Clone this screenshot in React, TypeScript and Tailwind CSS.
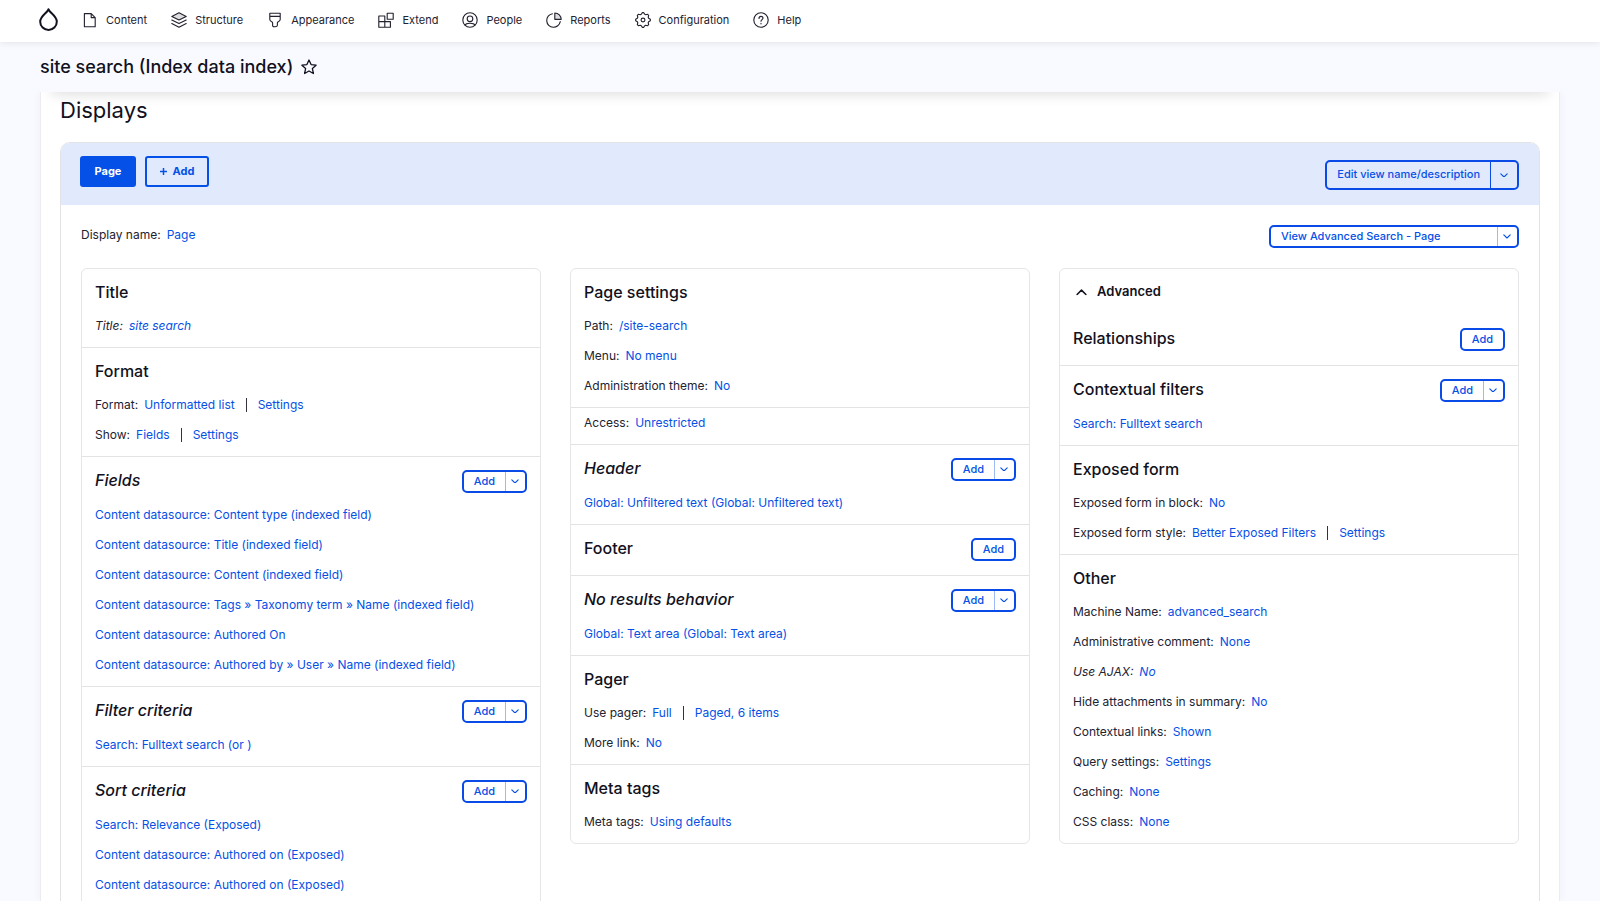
import React from 'react';

type Row = {
  label?: string;
  links: string[];
  italic?: boolean;
};

type SectionProps = {
  title?: string;
  italic?: boolean;
  action?: 'add' | 'split';
  rows?: Row[];
};

const Icon: React.FC<{ children: React.ReactNode }> = ({ children }) => (
  <svg className="w-4 h-4 shrink-0" viewBox="0 0 20 20" fill="none" stroke="currentColor" strokeWidth="1.4" strokeLinejoin="round" strokeLinecap="round" aria-hidden="true">
    {children}
  </svg>
);

// Outline of a gear with eight teeth, centred in the 20x20 icon box
const gear = Array.from({ length: 32 }, (_, i) => {
  const radius = i % 4 < 2 ? 9.2 : 7.4;
  const angle = ((i - 0.5) * Math.PI) / 16;
  return `${(10 + radius * Math.sin(angle)).toFixed(2)} ${(10 - radius * Math.cos(angle)).toFixed(2)}`;
}).join('L');

const menu = [
  { name: 'Content', icon: <path d="M3 2h8.500l5 5v11.500H3zM11.500 2v5h5" /> },
  {
    name: 'Structure',
    icon: (
      <>
        <path d="M10 1l9 4.500-9 4.500-9-4.500z" fill="currentColor" fillOpacity="0.15" />
        <path d="M1 10l9 4.500 9-4.500M1 14.500L10 19l9-4.500" />
      </>
    ),
  },
  {
    name: 'Appearance',
    icon: <path d="M3.500 5.500v4c0 2.500 3.500 2 3.500 4v3.500c0 2.500 6 1.500 6-.5v-3c0-2 3.500-1.500 3.500-4v-8h-13v4h13" />,
  },
  {
    name: 'Extend',
    icon: <path d="M1 5h7.500v14H1zM1 12h14.500v7h-7M11.500 1.500H19V9h-7.500z" />,
  },
  {
    name: 'People',
    icon: (
      <>
        <circle cx="10" cy="10" r="9" />
        <circle cx="10" cy="8.500" r="3.500" />
        <path d="M4 16.500c.5-2 2-2.500 6-2.500s5.500.5 6 2.500" />
      </>
    ),
  },
  {
    name: 'Reports',
    icon: (
      <>
        <path d="M8 2.200A8.500 8.500 0 1 0 17.800 12" />
        <path d="M11 1.200v8h8a8 8 0 0 0-8-8z" fill="currentColor" fillOpacity="0.15" />
      </>
    ),
  },
  {
    name: 'Configuration',
    icon: (
      <>
        <path d={`M${gear}z`} />
        <circle cx="10" cy="10" r="2.400" />
      </>
    ),
  },
  {
    name: 'Help',
    icon: (
      <>
        <circle cx="10" cy="10" r="9" />
        <path d="M7.500 8c0-3.500 5-3.300 5-.4 0 1.900-2.500 1.900-2.500 4M10 14.200v.6" />
      </>
    ),
  },
];

const Chevron: React.FC<{ className?: string }> = ({ className }) => (
  <svg className={className} viewBox="0 0 10 6" fill="none" stroke="currentColor" strokeWidth="1.4" strokeLinecap="round" strokeLinejoin="round" aria-hidden="true">
    <path d="M1 1l4 4 4-4" />
  </svg>
);

const AddButton: React.FC<{ split?: boolean }> = ({ split }) => (
  <div className="flex h-[23px] shrink-0 overflow-hidden rounded-[5px] border-2 border-[#0a4be8] text-[11px] font-medium text-[#0550e6]">
    <button type="button" className="w-[41px]">
      Add
    </button>
    {split && (
      <button type="button" aria-label="List additional actions" className="flex w-5 items-center justify-center border-l border-[#9db9f7] pr-px">
        <Chevron className="w-2" />
      </button>
    )}
  </div>
);

const Section: React.FC<SectionProps> = ({ title, italic, action, rows = [] }) => (
  <section className={`border-b border-[#e3e3e6] px-[13px] last:border-b-0 ${rows.length ? 'pb-1.5' : 'pb-[7px]'} ${title ? 'pt-[11px]' : ''}`}>
    {title && (
      <div className={`mb-1.5 flex justify-between ${action ? 'h-[26px]' : 'h-[25px]'}`}>
        <h3 className={`text-[16px] leading-6 font-medium text-[#111120] ${italic ? 'italic' : ''}`}>{title}</h3>
        {action && (
          <div className="flex items-center">
            <AddButton split={action === 'split'} />
          </div>
        )}
      </div>
    )}
    {rows.map((row, i) => (
      <div key={i} className={`flex h-[30px] items-center gap-1.5 whitespace-nowrap ${row.italic ? 'italic' : ''}`}>
        {row.label && <span>{row.label}</span>}
        {row.links.map((link, n) => (
          <React.Fragment key={link}>
            {n > 0 && <span className="mx-[5px] h-3.5 w-px bg-[#333340]"></span>}
            <a href="#" className="text-[#0550e6]">
              {link}
            </a>
          </React.Fragment>
        ))}
      </div>
    ))}
  </section>
);

const first: SectionProps[] = [
  { title: 'Title', rows: [{ label: 'Title:', links: ['site search'], italic: true }] },
  {
    title: 'Format',
    rows: [
      { label: 'Format:', links: ['Unformatted list', 'Settings'] },
      { label: 'Show:', links: ['Fields', 'Settings'] },
    ],
  },
  {
    title: 'Fields',
    italic: true,
    action: 'split',
    rows: [
      { links: ['Content datasource: Content type (indexed field)'] },
      { links: ['Content datasource: Title (indexed field)'] },
      { links: ['Content datasource: Content (indexed field)'] },
      { links: ['Content datasource: Tags » Taxonomy term » Name (indexed field)'] },
      { links: ['Content datasource: Authored On'] },
      { links: ['Content datasource: Authored by » User » Name (indexed field)'] },
    ],
  },
  { title: 'Filter criteria', italic: true, action: 'split', rows: [{ links: ['Search: Fulltext search (or )'] }] },
  {
    title: 'Sort criteria',
    italic: true,
    action: 'split',
    rows: [
      { links: ['Search: Relevance (Exposed)'] },
      { links: ['Content datasource: Authored on (Exposed)'] },
      { links: ['Content datasource: Authored on (Exposed)'] },
    ],
  },
];

const second: SectionProps[] = [
  {
    title: 'Page settings',
    rows: [
      { label: 'Path:', links: ['/site-search'] },
      { label: 'Menu:', links: ['No menu'] },
      { label: 'Administration theme:', links: ['No'] },
    ],
  },
  { rows: [{ label: 'Access:', links: ['Unrestricted'] }] },
  { title: 'Header', italic: true, action: 'split', rows: [{ links: ['Global: Unfiltered text (Global: Unfiltered text)'] }] },
  { title: 'Footer', action: 'add' },
  { title: 'No results behavior', italic: true, action: 'split', rows: [{ links: ['Global: Text area (Global: Text area)'] }] },
  {
    title: 'Pager',
    rows: [
      { label: 'Use pager:', links: ['Full', 'Paged, 6 items'] },
      { label: 'More link:', links: ['No'] },
    ],
  },
  { title: 'Meta tags', rows: [{ label: 'Meta tags:', links: ['Using defaults'] }] },
];

const third: SectionProps[] = [
  { title: 'Relationships', action: 'add' },
  { title: 'Contextual filters', action: 'split', rows: [{ links: ['Search: Fulltext search'] }] },
  {
    title: 'Exposed form',
    rows: [
      { label: 'Exposed form in block:', links: ['No'] },
      { label: 'Exposed form style:', links: ['Better Exposed Filters', 'Settings'] },
    ],
  },
  {
    title: 'Other',
    rows: [
      { label: 'Machine Name:', links: ['advanced_search'] },
      { label: 'Administrative comment:', links: ['None'] },
      { label: 'Use AJAX:', links: ['No'], italic: true },
      { label: 'Hide attachments in summary:', links: ['No'] },
      { label: 'Contextual links:', links: ['Shown'] },
      { label: 'Query settings:', links: ['Settings'] },
      { label: 'Caching:', links: ['None'] },
      { label: 'CSS class:', links: ['None'] },
    ],
  },
];

const Column: React.FC<{ sections: SectionProps[]; children?: React.ReactNode }> = ({ sections, children }) => (
  <div className="min-w-0 rounded-md border border-[#e6e6e9]">
    {children}
    {sections.map((section, i) => (
      <Section key={i} {...section} />
    ))}
  </div>
);

const App: React.FC = () => {
  return (
    <div className="flex h-screen flex-col overflow-hidden bg-[#f9faff] font-['Inter',sans-serif] text-[12px] text-[#222230]">
      {/* Admin toolbar */}
      <nav className="relative z-20 flex h-[42px] shrink-0 items-center bg-white pb-0.5 pl-[39px] text-[11px] shadow-[0_0_8px_rgba(0,0,0,0.12)]">
        <a href="#" aria-label="Home" className="mr-6 text-[#111120]">
          <svg className="w-[19px] h-6" viewBox="0 0 19 24" fill="none" stroke="currentColor" strokeWidth="2" strokeLinejoin="round" aria-hidden="true">
            <path d="M9.500 1.200C8.500 5 1.200 7.500 1.200 13.700a8.300 8.300 0 0 0 16.600 0C17.800 7.500 10.500 5 9.500 1.200z" />
          </svg>
        </a>
        <ul className="flex gap-6">
          {menu.map((item) => (
            <li key={item.name}>
              <a href="#" className="flex items-center gap-2 text-[#222230]">
                <Icon>{item.icon}</Icon>
                {item.name}
              </a>
            </li>
          ))}
        </ul>
      </nav>

      {/* Page title */}
      <header className="relative z-10 mx-10 flex h-[50px] shrink-0 items-center gap-2 bg-[#f9faff] text-[#111120] shadow-[0_14px_14px_-12px_rgba(0,0,0,0.14)]">
        <h1 className="text-[18px] leading-6 font-medium">site search (Index data index)</h1>
        <button type="button" aria-label="Add to shortcuts">
          <svg className="w-4 h-4" viewBox="0 0 16 16" fill="none" stroke="currentColor" strokeWidth="1.300" strokeLinejoin="round" aria-hidden="true">
            <path d="M8 1l2.100 4.600 5 .6-3.700 3.400 1 4.900L8 12l-4.400 2.500 1-4.900L.9 6.200l5-.6z" />
          </svg>
        </button>
      </header>

      <main className="mx-10 flex min-h-0 flex-1 flex-col border-x border-[#ececf0] bg-white px-[19px] pt-0.5 shadow-[0_0_8px_rgba(60,80,160,0.06)]">
        <h2 className="mb-4 text-[22px] leading-8 text-[#111120]">Displays</h2>

        <div className="min-h-0 flex-1 rounded-t-[10px] border border-b-0 border-[#e3e3e6]">
          <div className="flex h-[62px] items-start justify-between rounded-t-[9px] bg-[#e1e9fc] pl-[19px] pr-5 pt-[13px] text-[11px] text-[#0550e6]">
            <div className="flex gap-[9px] font-bold">
              <button type="button" className="h-[31px] w-14 rounded-[3px] bg-[#0550e6] text-white">
                Page
              </button>
              <button type="button" className="flex h-[31px] w-16 items-center justify-center gap-1.5 rounded-[3px] border-2 border-[#0550e6]">
                <svg className="w-[7px] h-[7px]" viewBox="0 0 7 7" stroke="currentColor" strokeWidth="1.500" aria-hidden="true">
                  <path d="M3.500 0v7M0 3.500h7" />
                </svg>
                Add
              </button>
            </div>
            <div className="mt-1 flex h-[30px] overflow-hidden rounded-[5px] border-2 border-[#0a4be8] font-medium">
              <button type="button" className="px-2.5 pb-0.5">
                Edit view name/description
              </button>
              <button type="button" aria-label="List additional actions" className="flex w-[27px] items-center justify-center border-l border-[#0a4be8] pr-px">
                <Chevron className="w-2" />
              </button>
            </div>
          </div>

          <div className="flex items-start justify-between px-5 pt-5">
            <p className="flex h-5 items-center gap-1.5">
              Display name:
              <a href="#" className="text-[#0550e6]">
                Page
              </a>
            </p>
            <div className="flex h-[23px] w-[250px] overflow-hidden rounded-[5px] border-2 border-[#0a4be8] text-[11px] font-medium text-[#0550e6]">
              <a href="#" className="flex flex-1 items-center pl-2.5">
                View Advanced Search - Page
              </a>
              <button type="button" aria-label="List additional actions" className="flex w-5 items-center justify-center border-l border-[#9db9f7] pr-px">
                <Chevron className="w-2" />
              </button>
            </div>
          </div>

          <div className="mt-5 grid grid-cols-3 items-start gap-[29px] px-5">
            <Column sections={first} />
            <Column sections={second} />
            <Column sections={third}>
              <button type="button" className="flex h-[46px] w-full items-center gap-2.5 px-4 text-[13px] font-semibold text-[#111120]">
                <Chevron className="w-[11px] rotate-180" />
                Advanced
              </button>
            </Column>
          </div>
        </div>
      </main>
    </div>
  );
};

export default App;
